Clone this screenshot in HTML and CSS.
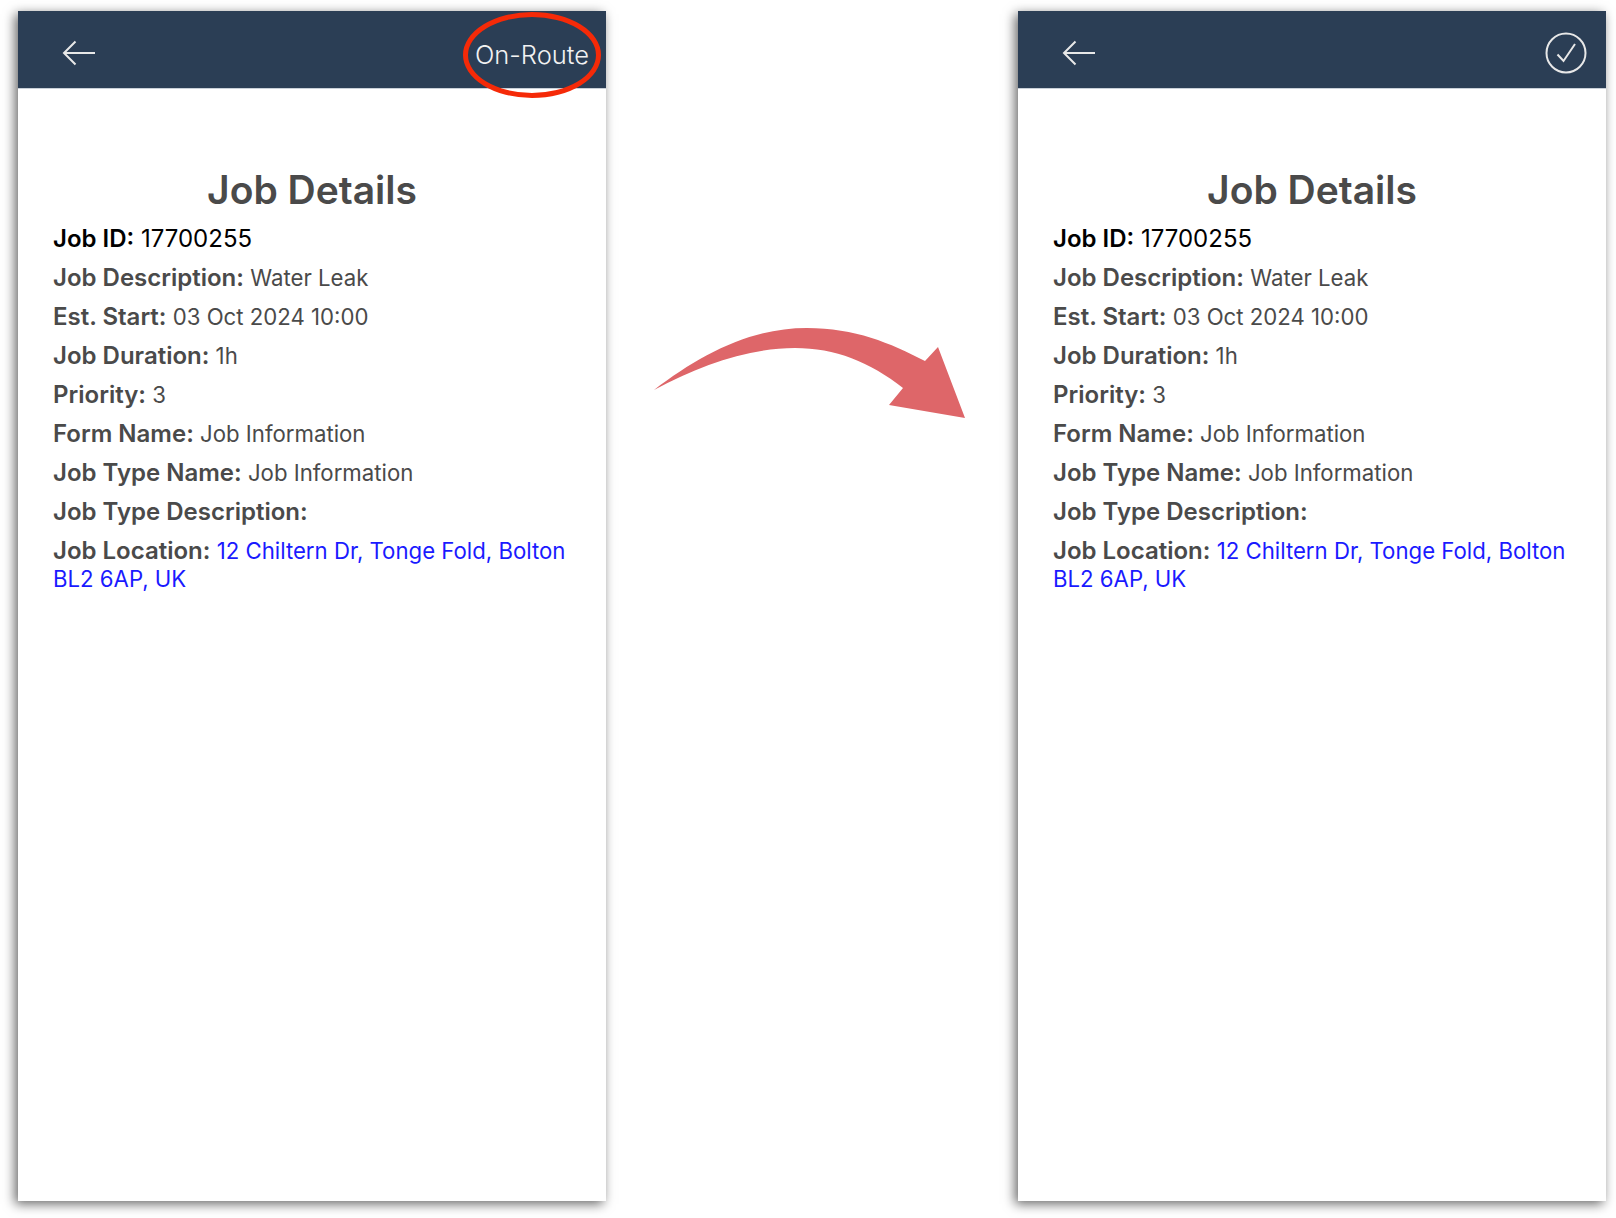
FILE: index.html
```html
<!DOCTYPE html>
<html lang="en">
<head>
  <meta charset="utf-8">
  <title>Job Details</title>
  <link rel="stylesheet" href="styles.css">
</head>
<body>
  <!-- before -->
  <div class="phone">
    <div class="topbar">
      <svg class="back-icon" viewBox="0 0 34 26"><path d="M33 13H2M13.500 1.500L2 13l11.500 11.500"/></svg>
      <span class="status-text">On-Route</span>
    </div>
    <div class="red-circle"></div>
    <div class="details">
      <h1>Job Details</h1>
      <p class="first-row"><b>Job ID:</b> 17700255</p>
      <p><b>Job Description:</b> Water Leak</p>
      <p><b>Est. Start:</b> 03 Oct 2024 10:00</p>
      <p><b>Job Duration:</b> 1h</p>
      <p><b>Priority:</b> 3</p>
      <p><b>Form Name:</b> Job Information</p>
      <p><b>Job Type Name:</b> Job Information</p>
      <p><b>Job Type Description:</b></p>
      <p class="location"><b>Job Location:</b> <a href="#">12 Chiltern Dr, Tonge Fold, Bolton BL2 6AP, UK</a></p>
    </div>
  </div>

  <!-- arrow between the two phones -->
  <svg class="big-arrow" viewBox="0 0 350 120">
    <path d="M24 80C70 45 120 18 177 18C225 18 260 33 295 51L308 37L335 108L259 95L273 78C240 52 205 38 165 38C120 38 70 55 24 80Z"/>
  </svg>

  <!-- after -->
  <div class="phone">
    <div class="topbar">
      <svg class="back-icon" viewBox="0 0 34 26"><path d="M33 13H2M13.500 1.500L2 13l11.500 11.500"/></svg>
      <svg class="check-icon" viewBox="0 0 42 42"><circle cx="21" cy="21" r="19.500"/><path d="M12.500 22.500l6 6.500L30 12"/></svg>
    </div>
    <div class="details">
      <h1>Job Details</h1>
      <p class="first-row"><b>Job ID:</b> 17700255</p>
      <p><b>Job Description:</b> Water Leak</p>
      <p><b>Est. Start:</b> 03 Oct 2024 10:00</p>
      <p><b>Job Duration:</b> 1h</p>
      <p><b>Priority:</b> 3</p>
      <p><b>Form Name:</b> Job Information</p>
      <p><b>Job Type Name:</b> Job Information</p>
      <p><b>Job Type Description:</b></p>
      <p class="location"><b>Job Location:</b> <a href="#">12 Chiltern Dr, Tonge Fold, Bolton BL2 6AP, UK</a></p>
    </div>
  </div>
</body>
</html>
```

FILE: styles.css
```css
* {
  margin: 0; padding: 0; box-sizing: border-box;
}
body {
  display: flex;
  align-items: flex-start;
  justify-content: space-between;
  height: 1218px;
  padding: 11px 10px 0 18px;
  background-color: #fff;
  font-family: Inter, "Liberation Sans", sans-serif;
  overflow: hidden;
}

/* phone screen */
.phone {
  position: relative;
  width: 588px;
  height: 1190px;
  background-color: #fff;
  box-shadow: -3px 3px 11px rgba(0, 0, 0, 0.6);
}

.topbar {
  display: flex;
  align-items: center;
  justify-content: space-between;
  height: 78px;
  padding: 7px 18px 0 44px;
  background-color: #2b3e55;
  border-bottom: 1px solid #c9d0d8;
  color: #f2f2f2;
}
.back-icon {
  width: 34px;
  height: 26px;
  fill: none;
  stroke: #e8e8e8;
  stroke-width: 2;
}
.check-icon {
  width: 42px;
  height: 42px;
  margin-right: 1px;
  fill: none;
  stroke: #e8e8e8;
  stroke-width: 2;
}
.status-text {
  margin-right: -1px;
  padding-top: 3px;
  font-size: 25.500px;
  font-weight: 300;
  line-height: 32px;
}

/* hand drawn red ring round the status */
.red-circle {
  position: absolute;
  top: 1px;
  right: 5px;
  width: 138px;
  height: 86px;
  border: 5px solid #f52a08;
  border-radius: 50%;
}

.details {
  padding: 0 35px;
  color: #4a4a4a;
  font-size: 22.200px;
}
.details h1 {
  margin-top: 77px;
  margin-bottom: 12px;
  text-align: center;
  font-size: 39px;
  font-weight: 600;
  line-height: 47px;
}
.details p {
  line-height: 28px;
  margin-bottom: 11px;
}
.details b {
  font-size: 24px;
  font-weight: 600;
}
.details .first-row {
  color: #000;
  font-size: 24px;
}
.details a {
  color: #1a1aff;
  text-decoration: none;
}

.big-arrow {
  width: 350px;
  height: 120px;
  margin-top: 299px;
  margin-right: 15px;
  fill: #de6669;
}
```
